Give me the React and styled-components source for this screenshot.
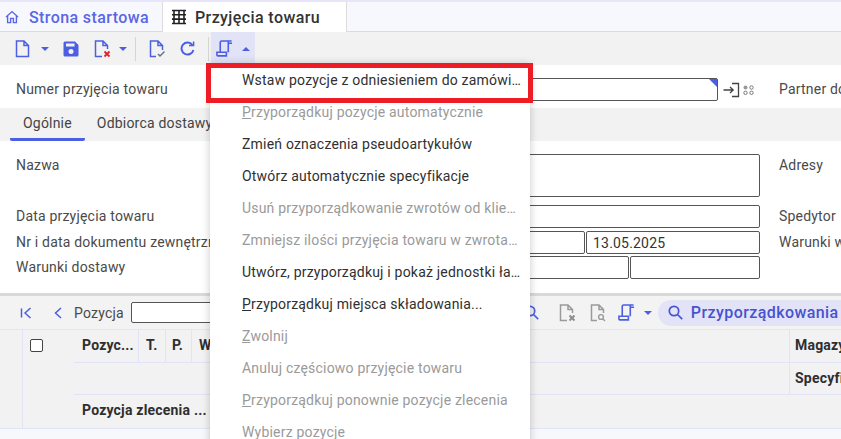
import React from "react";
import styled, { createGlobalStyle } from "styled-components";

const blue = "#4c5fe2";
const grey = "#9a9a9a";

const GlobalStyle = createGlobalStyle`
  html, body {
    margin: 0;
    padding: 0;
    height: 100%;
    background: #fff;
    font-family: Roboto, "Liberation Sans", sans-serif;
    overflow: hidden;
  }
`;

const Page = styled.div`
  position: relative;
  width: 841px;
  height: 439px;
  overflow: hidden;
  display: flex;
  flex-direction: column;
  color: #444;
  font-size: 14px;
  letter-spacing: 0.2px;
`;

const TabBar = styled.div`
  height: 29px;
  display: flex;
  border-top: 2px solid #e6e6f8;
  border-bottom: 1px solid #dcdcdc;
  background: #f7f8fd;
  flex: none;
`;

const Tab = styled.div`
  display: flex;
  align-items: center;
  gap: ${({ $active }) => ($active ? "8px" : "10px")};
  height: 30px;
  box-sizing: border-box;
  width: ${({ $active }) => ($active ? "185px" : "162px")};
  padding-left: ${({ $active }) => ($active ? "8px" : "5px")};
  font-size: 16px;
  font-weight: 500;
  letter-spacing: 0.4px;
  color: ${({ $active }) => ($active ? "#333" : "#5a66e6")};
  background: ${({ $active }) => ($active ? "#fff" : "transparent")};
  border-left: ${({ $active }) => ($active ? "1px solid #dcdcdc" : "none")};
  border-right: ${({ $active }) => ($active ? "1px solid #dcdcdc" : "none")};
`;

const Toolbar = styled.div`
  height: 33px;
  flex: none;
  display: flex;
  align-items: center;
  background: #f2f2f2;
  padding-left: 15px;
`;

const ToolIcon = styled.span`
  display: flex;
  align-items: center;
  justify-content: center;
  flex: none;
  margin-left: ${({ $ml }) => $ml || 0}px;
`;

const Caret = styled.span`
  width: 0;
  height: 0;
  flex: none;
  margin-left: ${({ $ml }) => $ml || 0}px;
  border-left: 4px solid transparent;
  border-right: 4px solid transparent;
  border-top: ${({ $up }) => ($up ? "none" : `4px solid ${blue}`)};
  border-bottom: ${({ $up }) => ($up ? `4px solid ${blue}` : "none")};
`;

const Separator = styled.span`
  width: 1px;
  height: 24px;
  background: #d4d4d4;
  flex: none;
  margin-left: ${({ $ml }) => $ml || 0}px;
`;

const ActiveTool = styled.div`
  width: 44px;
  height: 33px;
  margin-left: 2px;
  display: flex;
  align-items: center;
  padding-left: 5px;
  box-sizing: border-box;
  background: #e3e3f8;
`;

const HeaderForm = styled.div`
  height: 43px;
  flex: none;
  box-sizing: border-box;
  padding-top: 13px;
  background: #fff;
`;

const FieldRow = styled.div`
  display: grid;
  grid-template-columns: 204px 540px 1fr;
  column-gap: 0;
  padding-left: 16px;
  margin-top: ${({ $mt }) => $mt || 0}px;
`;

const Label = styled.div`
  line-height: 23px;
  white-space: nowrap;
  overflow: hidden;
  color: #4a4a4a;
`;

const RightLabel = styled(Label)`
  padding-left: 19px;
`;

const Fields = styled.div`
  display: flex;
  gap: 1px;
`;

const Input = styled.div`
  position: relative;
  box-sizing: border-box;
  flex: ${({ $w }) => ($w ? `0 0 ${$w}px` : "1")};
  height: ${({ $h }) => $h || 23}px;
  border: 1px solid #555;
  border-radius: 2px;
  background: #fff;
  padding-left: 6px;
  line-height: 22px;
  color: #333;
`;

const Required = styled.span`
  position: absolute;
  top: 0;
  right: 0;
  width: 0;
  height: 0;
  border-top: 8px solid ${blue};
  border-left: 8px solid transparent;
`;

const FieldIcons = styled.div`
  flex: 0 0 41px;
  display: flex;
  align-items: center;
  gap: 3px;
  padding-left: 4px;
  box-sizing: border-box;
`;

const SubTabs = styled.div`
  height: 33px;
  flex: none;
  display: flex;
  background: #f2f2f2;
  padding-left: 10px;
`;

const SubTab = styled.div`
  box-sizing: border-box;
  height: 33px;
  padding: 0 13px;
  margin-right: ${({ $active }) => ($active ? "-1px" : 0)};
  line-height: 31px;
  color: #444;
  white-space: nowrap;
  border-bottom: 3px solid ${({ $active }) => ($active ? blue : "transparent")};
  border-radius: 0 0 2px 2px;
`;

const FormBody = styled.div`
  height: 152px;
  flex: none;
  box-sizing: border-box;
  padding-top: 13px;
  background: #fff;
`;

const Divider = styled.div`
  height: 3px;
  flex: none;
  background: #d9d9d9;
`;

const ItemsToolbar = styled.div`
  height: 33px;
  flex: none;
  display: flex;
  align-items: center;
  background: #f3f3f3;
  padding-left: 20px;
`;

const PositionLabel = styled.span`
  margin-left: 12px;
  color: #4a4a4a;
  flex: none;
`;

const PositionInput = styled.div`
  width: 395px;
  height: 21px;
  box-sizing: border-box;
  border: 1px solid #555;
  border-radius: 2px;
  background: #fff;
  margin-left: 7px;
  flex: none;
`;

const Pill = styled.div`
  flex: none;
  height: 26px;
  width: 200px;
  margin-left: 6px;
  display: flex;
  align-items: center;
  gap: 8px;
  padding-left: 10px;
  border-radius: 13px;
  background: #e3e3f8;
  color: #4653cf;
  font-size: 16px;
  font-weight: 500;
  letter-spacing: 0.42px;
  white-space: nowrap;
`;

const Table = styled.div`
  height: 98px;
  flex: none;
  display: flex;
  background: #f2f2f2;
  border-top: 1px solid #e3e3f8;
  border-bottom: 1px solid #e3e3f8;
`;

const Gutter = styled.div`
  width: 22px;
  flex: none;
  border-right: 1px solid #e3e3f8;
`;

const CheckColumn = styled.div`
  width: 51px;
  flex: none;
  padding: 9px 0 0 7px;
  box-sizing: border-box;
`;

const Checkbox = styled.div`
  width: 13px;
  height: 13px;
  box-sizing: border-box;
  border: 1px solid #444;
  border-radius: 2px;
  background: #fff;
`;

const HeadRows = styled.div`
  flex: 1;
  min-width: 0;
  display: flex;
  flex-direction: column;
`;

const HeadRow = styled.div`
  height: ${({ $h }) => $h}px;
  flex: none;
  display: flex;
  box-sizing: border-box;
  border-bottom: ${({ $last }) => ($last ? "none" : "1px solid #e3e3f8")};
`;

const HeadCell = styled.div`
  box-sizing: border-box;
  width: ${({ $w }) => ($w ? `${$w}px` : "auto")};
  flex: ${({ $grow }) => ($grow ? 1 : "none")};
  padding: 7px 0 0 ${({ $pl }) => $pl || 8}px;
  font-weight: 700;
  color: #2f2f2f;
  white-space: nowrap;
  overflow: hidden;
  border-right: ${({ $line }) => ($line ? "1px solid #e3e3f8" : "none")};
`;

const Footer = styled.div`
  flex: 1;
  background: #f7f8fc;
`;

// menu and the red marking lie over the form
const Menu = styled.div`
  position: absolute;
  left: 210px;
  top: 64px;
  width: 320px;
  height: 390px;
  background: #fff;
  box-shadow: 0 0 8px rgba(0, 0, 0, 0.22);
`;

const MenuItem = styled.div`
  height: 32px;
  line-height: 32px;
  padding-left: 32px;
  white-space: nowrap;
  color: ${({ $off }) => ($off ? grey : "#303030")};
`;

const Marking = styled.div`
  position: absolute;
  left: 206px;
  top: 63px;
  width: 327px;
  height: 40px;
  box-sizing: border-box;
  border: 5px solid #ee1c25;
`;

const Svg = ({ w = 16, h = 16, box, children, color = blue, sw = 1.6, fill = "none" }) => (
  <svg width={w} height={h} viewBox={box || `0 0 ${w} ${h}`} fill={fill} stroke={color} strokeWidth={sw}>
    {children}
  </svg>
);

const HomeIcon = () => (
  <Svg w={14} h={14} color="#5a66e6" sw={1.4}>
    <path d="M1 7 7 1.6 13 7M2.6 5.8V12.6H5.6V8.4H8.4V12.6H11.4V5.8" />
  </Svg>
);

const GridIcon = () => (
  <Svg w={16} h={16} color="#222" sw={1.6}>
    <path d="M1 1.5H15M1 5.8H15M1 10.1H15M1 14.5H15M3 1V15M8 1V15M13 1V15" />
  </Svg>
);

const DocIcon = ({ color = blue }) => (
  <Svg w={15} h={18} color={color} sw={1.5}>
    <path d="M1.5 1H9L13.5 5.5V16.5H1.5Z M9 1V5.5H13.5" />
  </Svg>
);

const SaveIcon = () => (
  <svg width="16" height="16" viewBox="0 0 16 16">
    <path d="M2 0.5H12L15.5 4V14A1.5 1.5 0 0 1 14 15.5H2A1.5 1.5 0 0 1 0.5 14V2A1.5 1.5 0 0 1 2 0.5Z" fill={blue} />
    <rect x="3" y="2.5" width="8.5" height="3" fill="#f2f2f2" />
    <circle cx="8" cy="10.5" r="2.5" fill="#f2f2f2" />
  </svg>
);

const DocCrossIcon = ({ color = blue, mark = "#e02030" }) => (
  <svg width="17" height="18" viewBox="0 0 17 18" fill="none">
    <path d="M8 16.5H1.5V1H9L13.5 5.5V9M9 1V5.5H13.5" stroke={color} strokeWidth="1.5" />
    <path d="M10.5 11.5 15.5 16.5M15.5 11.5 10.5 16.5" stroke={mark} strokeWidth="1.8" />
  </svg>
);

const DocCheckIcon = () => (
  <svg width="17" height="18" viewBox="0 0 17 18" fill="none">
    <path d="M7 16.5H1.5V1H9L13.5 5.5V10M9 1V5.5H13.5" stroke={blue} strokeWidth="1.5" />
    <path d="M9 14 11 16 15.5 11.5" stroke="#5f6f8f" strokeWidth="1.4" />
  </svg>
);

const DocSearchIcon = () => (
  <svg width="17" height="18" viewBox="0 0 17 18" fill="none">
    <path d="M7 16.5H1.5V1H9L13.5 5.5V9M9 1V5.5H13.5" stroke={grey} strokeWidth="1.5" />
    <circle cx="11" cy="13" r="2.4" stroke={grey} strokeWidth="1.4" />
    <path d="M13 15 15 17" stroke={grey} strokeWidth="1.5" />
  </svg>
);

const RefreshIcon = () => (
  <Svg w={15} h={15} sw={2}>
    <path d="M12.4 4A6 6 0 1 0 13.4 9" />
    <path d="M9 4.6H13.6V0.4" strokeWidth="1.5" />
  </Svg>
);

const ScrollIcon = () => (
  <Svg w={17} h={17} box="0 0 18 18" sw={1.7}>
    <path d="M4.5 13V2.5A1.5 1.5 0 0 1 6 1H16.5M13 1V2A1.5 1.5 0 0 0 14.5 3.5H17M13 1.5V13" />
    <path d="M1 13H11V16.8H2A1 1 0 0 1 1 15.8Z" />
  </Svg>
);

const SearchIcon = ({ color = blue }) => (
  <Svg w={15} h={15} color={color} sw={1.7}>
    <circle cx="6" cy="6" r="4.7" />
    <path d="M9.5 9.5 14.2 14.2" />
  </Svg>
);

const FirstIcon = () => (
  <Svg w={12} h={12} sw={1.5}>
    <path d="M1.5 1.5V10.5M10.5 1 5 6 10.5 11" />
  </Svg>
);

const PrevIcon = () => (
  <Svg w={8} h={12} sw={1.5}>
    <path d="M7 1 1.5 6 7 11" />
  </Svg>
);

const EnterIcon = () => (
  <Svg w={17} h={16} color="#444" sw={1.3}>
    <path d="M0.5 8H10M7 5 10.2 8 7 11M9 1.5H15.5V14.5H9" />
  </Svg>
);

const DotsIcon = () => (
  <svg width="11" height="10" viewBox="0 0 11 10" fill="none">
    <circle cx="2.5" cy="2.5" r="2" fill="#999" />
    <circle cx="8.5" cy="2.5" r="1.7" stroke="#777" />
    <circle cx="2.5" cy="7.8" r="1.7" stroke="#777" />
    <circle cx="8.5" cy="7.8" r="1.7" stroke="#777" />
  </svg>
);

const menuItems = [
  { text: "Wstaw pozycje z odniesieniem do zamówi…" },
  { key: "P", text: "rzyporządkuj pozycje automatycznie", off: true },
  { text: "Zmień oznaczenia pseudoartykułów" },
  { text: "Otwórz automatycznie specyfikacje" },
  { text: "Usuń przyporządkowanie zwrotów od klie…", off: true },
  { text: "Zmniejsz ilości przyjęcia towaru w zwrota…", off: true },
  { text: "Utwórz, przyporządkuj i pokaż jednostki ła…" },
  { key: "P", text: "rzyporządkuj miejsca składowania..." },
  { key: "Z", text: "wolnij", off: true },
  { text: "Anuluj częściowo przyjęcie towaru", off: true },
  { key: "P", text: "rzyporządkuj ponownie pozycje zlecenia", off: true },
  { text: "Wybierz pozycje", off: true },
];

export default function App() {
  return (
    <Page>
      <GlobalStyle />
      <TabBar>
        <Tab>
          <HomeIcon />
          Strona startowa
        </Tab>
        <Tab $active>
          <GridIcon />
          Przyjęcia towaru
        </Tab>
      </TabBar>

      <Toolbar>
        <ToolIcon><DocIcon /></ToolIcon>
        <Caret $ml={11} />
        <ToolIcon $ml={14}><SaveIcon /></ToolIcon>
        <ToolIcon $ml={15}><DocCrossIcon /></ToolIcon>
        <Caret $ml={8} />
        <Separator $ml={8} />
        <ToolIcon $ml={13}><DocCheckIcon /></ToolIcon>
        <ToolIcon $ml={14}><RefreshIcon /></ToolIcon>
        <Separator $ml={13} />
        <ActiveTool>
          <ScrollIcon />
          <Caret $up $ml={9} />
        </ActiveTool>
      </Toolbar>

      <HeaderForm>
        <FieldRow>
          <Label>Numer przyjęcia towaru</Label>
          <Fields>
            <Input>
              <Required />
            </Input>
            <FieldIcons>
              <EnterIcon />
              <DotsIcon />
            </FieldIcons>
          </Fields>
          <RightLabel>Partner dostawy</RightLabel>
        </FieldRow>
      </HeaderForm>

      <SubTabs>
        <SubTab $active>Ogólnie</SubTab>
        <SubTab>Odbiorca dostawy</SubTab>
      </SubTabs>

      <FormBody>
        <FieldRow>
          <Label>Nazwa</Label>
          <Fields><Input $h={43} /></Fields>
          <RightLabel>Adresy</RightLabel>
        </FieldRow>
        <FieldRow $mt={8}>
          <Label>Data przyjęcia towaru</Label>
          <Fields><Input /></Fields>
          <RightLabel>Spedytor</RightLabel>
        </FieldRow>
        <FieldRow $mt={3}>
          <Label>Nr i data dokumentu zewnętrznego</Label>
          <Fields>
            <Input />
            <Input $w={174}>13.05.2025</Input>
          </Fields>
          <RightLabel>Warunki wysyłki</RightLabel>
        </FieldRow>
        <FieldRow $mt={2}>
          <Label>Warunki dostawy</Label>
          <Fields>
            <Input />
            <Input $w={130} />
          </Fields>
        </FieldRow>
      </FormBody>

      <Divider />

      <ItemsToolbar>
        <ToolIcon><FirstIcon /></ToolIcon>
        <ToolIcon $ml={22}><PrevIcon /></ToolIcon>
        <PositionLabel>Pozycja</PositionLabel>
        <PositionInput />
        <ToolIcon $ml={-2}><SearchIcon /></ToolIcon>
        <ToolIcon $ml={20}><DocCrossIcon color={grey} mark="#8a8a8a" /></ToolIcon>
        <ToolIcon $ml={14}><DocSearchIcon /></ToolIcon>
        <ToolIcon $ml={11}><ScrollIcon /></ToolIcon>
        <Caret $ml={9} />
        <Pill>
          <SearchIcon color="#4653cf" />
          Przyporządkowania
        </Pill>
      </ItemsToolbar>

      <Table>
        <Gutter />
        <CheckColumn><Checkbox /></CheckColumn>
        <HeadRows>
          <HeadRow $h={33}>
            <HeadCell $w={65} $line>Pozyc...</HeadCell>
            <HeadCell $w={27} $line $pl={7}>T.</HeadCell>
            <HeadCell $w={26} $line $pl={6}>P.</HeadCell>
            <HeadCell $w={598} $line $pl={7}>W</HeadCell>
            <HeadCell $grow $pl={5}>Magazyn</HeadCell>
          </HeadRow>
          <HeadRow $h={32}>
            <HeadCell $w={716} $line />
            <HeadCell $grow $pl={5}>Specyfikacja</HeadCell>
          </HeadRow>
          <HeadRow $h={32} $last>
            <HeadCell $grow>Pozycja zlecenia ...</HeadCell>
          </HeadRow>
        </HeadRows>
      </Table>

      <Footer />

      <Menu>
        {menuItems.map((item, i) => (
          <MenuItem key={i} $off={item.off}>
            {item.key && <u>{item.key}</u>}
            {item.text}
          </MenuItem>
        ))}
      </Menu>
      <Marking />
    </Page>
  );
}
